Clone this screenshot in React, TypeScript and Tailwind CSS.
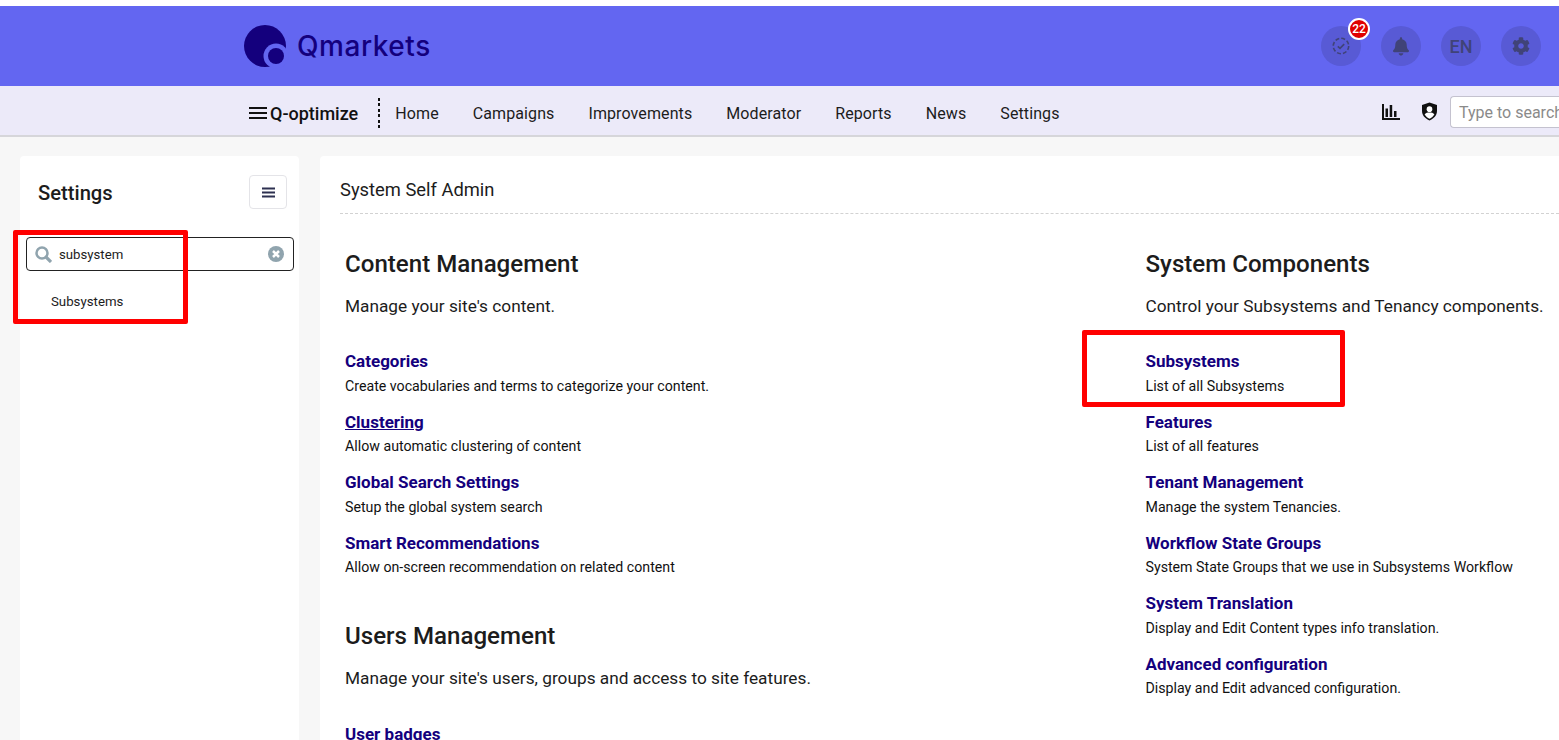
import React from "react";

function Logo() {
  return (
    <svg width="42" height="42" viewBox="0 0 42 42" className="shrink-0 overflow-visible">
      <circle cx="21" cy="21" r="21" fill="#14007d" />
      <circle cx="32" cy="31" r="12.500" fill="#6366f1" />
      <circle cx="32" cy="31" r="8" fill="#14007d" />
    </svg>
  );
}

function RoundBtn({ children }: { children: React.ReactNode }) {
  return (
    <div className="relative flex h-10 w-10 items-center justify-center rounded-full bg-[#585ad5] text-[#404378]">
      {children}
    </div>
  );
}

function Entry({ title, desc, underline }: { title: string; desc: string; underline?: boolean }) {
  return (
    <div className="h-[60.5px]">
      <div className={`text-[17px] font-bold leading-[24px] text-[#14007d] ${underline ? "underline" : ""}`}>{title}</div>
      <div className="mt-[0.25px] text-[14.2px] leading-[24px] text-[#111]">{desc}</div>
    </div>
  );
}

function Section({ title, sub }: { title: string; sub: string }) {
  return (
    <div>
      <h2 className="text-[24.1px] font-medium leading-[30px] text-[#1c1c1c]">{title}</h2>
      <p className="mt-[15px] text-[17.25px] leading-[24px] text-[#1c1c1c]">{sub}</p>
    </div>
  );
}

export default function App() {
  return (
    <div className="relative h-[740px] w-[1559px] overflow-hidden bg-[#f7f7f7] font-['Roboto',sans-serif]">
      <div className="h-[6px] bg-white" />
      <header className="flex h-[80px] items-center justify-between bg-[#6366f1] pl-[244px] pr-[18px]">
        <div className="flex items-center gap-[11px]">
          <Logo />
          <span className="font-['Inter',sans-serif] text-[28px] font-medium leading-none tracking-[0.55px] text-[#14007d]">Qmarkets</span>
        </div>
        <div className="flex items-center gap-5">
          <RoundBtn>
            <svg width="18" height="18" viewBox="0 0 18 18" fill="none" stroke="#404378" strokeWidth="1.600" className="-ml-[1px]">
              <circle cx="9" cy="9" r="7.700" strokeDasharray="4 2.050" />
              <path d="M5.800 9.300 8 11.400l4.200-4.300" />
            </svg>
            <span className="absolute left-[27px] top-[-8px] flex h-[22px] w-[22px] items-center justify-center rounded-full border-2 border-white bg-[#e00000] text-[12px] font-medium text-white">22</span>
          </RoundBtn>
          <RoundBtn>
            <svg width="16" height="19" viewBox="0 0 448 512" fill="#404378">
              <path d="M224 512c35.300 0 64-28.700 64-64H160c0 35.300 28.700 64 64 64zm215.400-149.700c-19.300-20.800-55.500-52-55.500-154.300 0-77.700-54.500-139.900-127.900-155.200V32c0-17.700-14.300-32-32-32s-32 14.300-32 32v20.800C118.600 68.100 64.100 130.300 64.100 208c0 102.300-36.200 133.500-55.500 154.300-6 6.400-8.700 14.100-8.600 21.700.1 16.400 13 32 32.100 32h383.800c19.100 0 32-15.600 32.100-32 .1-7.600-2.600-15.300-8.600-21.700z" />
            </svg>
          </RoundBtn>
          <RoundBtn>
            <span className="text-[18px] font-medium">EN</span>
          </RoundBtn>
          <RoundBtn>
            <svg width="18" height="18" viewBox="0 0 512 512" fill="#404378">
              <path d="M487.400 315.700l-42.600-24.600c4.300-23.200 4.300-47 0-70.200l42.600-24.600c4.900-2.800 7.100-8.600 5.500-14-11.100-35.600-30-67.800-54.700-94.600-3.800-4.100-10-5.100-14.800-2.300L380.800 110c-17.900-15.400-38.500-27.300-60.800-35.100V25.800c0-5.600-3.900-10.500-9.400-11.700-36.700-8.200-74.300-7.800-109.200 0-5.500 1.200-9.400 6.100-9.400 11.700V75c-22.200 7.900-42.800 19.800-60.800 35.100L88.700 85.500c-4.900-2.800-11-1.900-14.800 2.300-24.700 26.700-43.600 58.900-54.700 94.600-1.700 5.400.6 11.200 5.500 14L67.300 221c-4.300 23.200-4.300 47 0 70.200l-42.600 24.600c-4.900 2.800-7.100 8.600-5.500 14 11.100 35.600 30 67.800 54.700 94.600 3.800 4.100 10 5.100 14.800 2.300l42.600-24.600c17.900 15.400 38.500 27.300 60.800 35.100v49.200c0 5.600 3.900 10.500 9.400 11.700 36.700 8.200 74.300 7.800 109.200 0 5.500-1.200 9.400-6.100 9.400-11.700v-49.200c22.200-7.900 42.800-19.800 60.800-35.100l42.600 24.600c4.900 2.800 11 1.900 14.800-2.300 24.700-26.700 43.600-58.900 54.700-94.600 1.500-5.500-.7-11.300-5.600-14.100zM256 336c-44.100 0-80-35.900-80-80s35.900-80 80-80 80 35.900 80 80-35.900 80-80 80z" />
            </svg>
          </RoundBtn>
        </div>
      </header>

      <nav className="flex h-[51px] items-center border-b-2 border-[#d6d6da] bg-[#eceaf9] pl-[249px] pt-[5px]">
        <svg width="18" height="14" viewBox="0 0 18 14" stroke="#111" strokeWidth="2" className="-mt-[1px]">
          <path d="M0 2h18M0 7h18M0 12h18" />
        </svg>
        <span className="ml-[3px] text-[18px] font-medium text-[#111]">Q-optimize</span>
        <div className="ml-[20px] h-[31px] w-[2px] bg-[repeating-linear-gradient(to_bottom,#111_0,#111_3px,transparent_3px,transparent_5.500px)]" />
        <div className="ml-[15px] mt-[2px] flex gap-[34px] text-[16px] tracking-[0.1px] text-[#1c1c1c]">
          <span>Home</span>
          <span>Campaigns</span>
          <span>Improvements</span>
          <span>Moderator</span>
          <span>Reports</span>
          <span>News</span>
          <span>Settings</span>
        </div>
        <div className="ml-auto flex items-center">
          <svg width="18" height="16" viewBox="0 0 18 16" fill="#111" className="-ml-[1px] -mt-[3px]">
            <path d="M0 0h2v14h16v2H0Z" />
            <path d="M3.500 4.500h2.500V13H3.500ZM7.700 1h2.500v12H7.700ZM12 7h2.500v6H12Z" />
          </svg>
          <svg width="15" height="19" viewBox="0 0 16 19" className="ml-[22px] mr-[1px] -mt-[3px]">
            <path fill="#111" d="M8 0l8 2.500v6.500c0 4.500-3.400 8.300-8 10-4.600-1.700-8-5.500-8-10V2.500Z" />
            <circle cx="8" cy="7" r="3" fill="#fff" />
            <path fill="#fff" d="M2.800 12.500C4 10.800 6 10.500 8 10.500s4 .3 5.200 2C12 14.800 10.200 16.300 8 17.200 5.800 16.300 4 14.800 2.800 12.500Z" />
          </svg>
          <div className="-mt-[2px] ml-[12px] flex h-[32px] w-[109px] items-center overflow-hidden whitespace-nowrap rounded-l-[4px] border border-r-0 border-[#c4c2cf] bg-white pl-2 pt-[1px] text-[16px] text-[#8a8a8a]">
            Type to search
          </div>
        </div>
      </nav>

      <div className="flex items-start gap-[21px] pl-5 pt-[19px]">
        <aside className="h-[600px] w-[279px] shrink-0 rounded-[4px] bg-white">
          <div className="flex h-[72px] items-center justify-between pl-[18px] pr-3">
            <span className="pt-[2px] text-[20.2px] font-medium text-[#1c1c1c]">Settings</span>
            <div className="flex h-[34px] w-[38px] items-center justify-center rounded-[4px] border border-[#e4e4e8] bg-white">
              <svg width="13" height="11" viewBox="0 0 13 11" stroke="#2d3050" strokeWidth="2">
                <path d="M0 1.500h13M0 5.500h13M0 9.500h13" />
              </svg>
            </div>
          </div>
          <div className="ml-[6px] mt-[9px] flex h-[34px] w-[268px] items-center rounded-[4px] border border-[#222] bg-white pl-2 pr-[9px]">
            <svg width="17" height="17" viewBox="0 0 17 17" fill="none" stroke="#90a4ae" strokeWidth="2.500">
              <circle cx="7" cy="7" r="5.500" />
              <path d="M11 11l5 5" strokeWidth="3.200" />
            </svg>
            <span className="ml-[7px] pt-[1px] text-[13.2px] text-[#1c1c1c]">subsystem</span>
            <svg width="16" height="16" viewBox="0 0 16 16" className="ml-auto">
              <circle cx="8" cy="8" r="8" fill="#90a4ae" />
              <path d="M5 5l6 6M11 5l-6 6" stroke="#fff" strokeWidth="2.500" />
            </svg>
          </div>
          <div className="ml-[31px] mt-[22px] text-[13.25px] leading-[18px] text-[#1c1c1c]">Subsystems</div>
        </aside>

        <main className="h-[600px] flex-1 rounded-l-[4px] bg-white pl-5">
          <div className="flex h-[58px] items-center border-b border-dashed border-[#d2d2d2] text-[18.35px] text-[#1c1c1c]">
            <span className="mt-[10px]">System Self Admin</span>
          </div>
          <div className="flex pl-[5px] pt-[35px]">
            <div className="w-[800.5px] shrink-0">
              <Section title="Content Management" sub="Manage your site's content." />
              <div className="mt-[31.25px]">
                <Entry title="Categories" desc="Create vocabularies and terms to categorize your content." />
                <Entry title="Clustering" desc="Allow automatic clustering of content" underline />
                <Entry title="Global Search Settings" desc="Setup the global system search" />
                <Entry title="Smart Recommendations" desc="Allow on-screen recommendation on related content" />
              </div>
              <div className="mt-[30px]">
                <Section title="Users Management" sub="Manage your site's users, groups and access to site features." />
              </div>
              <div className="mt-[31.25px]">
                <Entry title="User badges" desc="" />
              </div>
            </div>
            <div className="flex-1 whitespace-nowrap">
              <Section title="System Components" sub="Control your Subsystems and Tenancy components." />
              <div className="mt-[31.25px]">
                <Entry title="Subsystems" desc="List of all Subsystems" />
                <Entry title="Features" desc="List of all features" />
                <Entry title="Tenant Management" desc="Manage the system Tenancies." />
                <Entry title="Workflow State Groups" desc="System State Groups that we use in Subsystems Workflow" />
                <Entry title="System Translation" desc="Display and Edit Content types info translation." />
                <Entry title="Advanced configuration" desc="Display and Edit advanced configuration." />
              </div>
            </div>
          </div>
        </main>
      </div>

      <div className="absolute left-[13px] top-[230px] h-[94px] w-[175px] rounded-[2px] border-[5px] border-[#ff0000]" />
      <div className="absolute left-[1082px] top-[330px] h-[77px] w-[263px] rounded-[2px] border-[5px] border-[#ff0000]" />
    </div>
  );
}
